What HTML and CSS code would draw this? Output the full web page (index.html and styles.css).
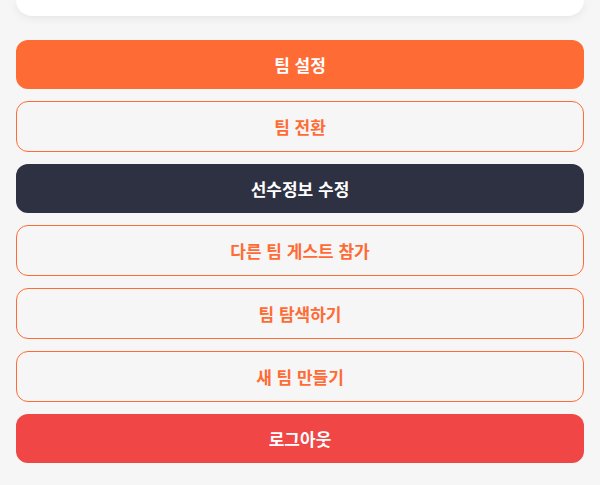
FILE: index.html
```html
<!DOCTYPE html>
<html lang="ko">
<head>
<meta charset="utf-8">
<link rel="stylesheet" href="styles.css">
</head>
<body>
<div class="page">
  <div class="card"></div>
  <div class="actions">
    <button class="btn btn-primary">팀 설정</button>
    <button class="btn btn-outline">팀 전환</button>
    <button class="btn btn-dark">선수정보 수정</button>
    <button class="btn btn-outline">다른 팀 게스트 참가</button>
    <button class="btn btn-outline">팀 탐색하기</button>
    <button class="btn btn-outline">새 팀 만들기</button>
    <button class="btn btn-danger">로그아웃</button>
  </div>
</div>
</body>
</html>
```
FILE: styles.css
```css
* { box-sizing: border-box; }
html, body {
  margin: 0;
  padding: 0;
  background: #f6f6f6;
  font-family: "Noto Sans CJK KR", "Noto Sans", sans-serif;
}
.page {
  padding: 0 16px;
  overflow: hidden;
  height: 485px;
}
.card {
  height: 16px;
  background: #fff;
  border-radius: 0 0 16px 16px;
  box-shadow: 0 2px 10px rgba(0,0,0,0.07);
  margin-bottom: 24px;
}
.actions {
  display: flex;
  flex-direction: column;
  gap: 12px;
}
.btn {
  display: block;
  width: 100%;
  height: 49px;
  border: none;
  border-radius: 12px;
  font-family: inherit;
  font-size: 17px;
  line-height: 1;
  font-weight: 700;
  color: #fff;
  padding: 0;
  cursor: pointer;
}
.btn-primary { background: #ff6b35; }
.btn-dark { background: #2d3142; }
.btn-danger { background: #f04646; }
.btn-outline {
  height: 51px;
  background: #f6f6f6;
  border: 1px solid #ff6b35;
  color: #ff6b35;
}
```
